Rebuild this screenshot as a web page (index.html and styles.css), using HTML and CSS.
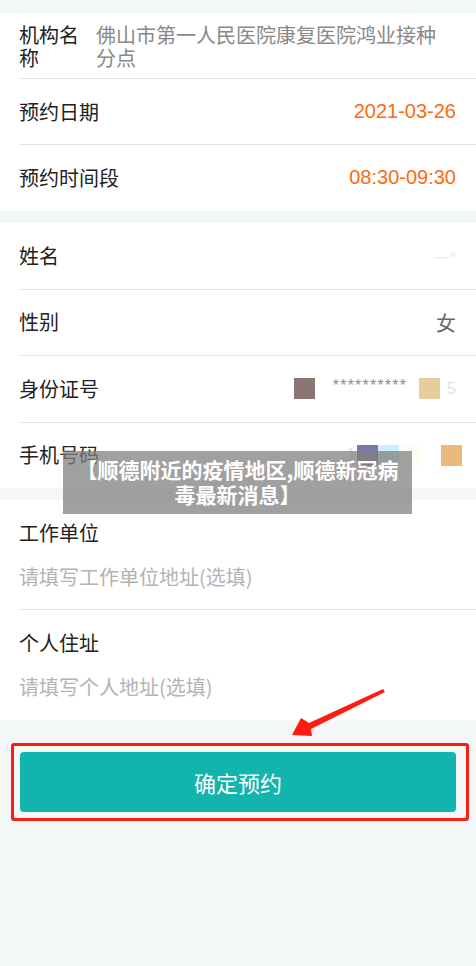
FILE: index.html
```html
<!DOCTYPE html>
<html lang="zh-CN">
<head>
<meta charset="utf-8">
<title>确定预约</title>
<link rel="stylesheet" href="styles.css">
</head>
<body>
<div class="page">
  <section class="card card-info">
    <div class="row row-tall">
      <div class="label label-narrow">机构名称</div>
      <div class="value-left">佛山市第一人民医院康复医院鸿业接种分点</div>
    </div>
    <div class="row">
      <div class="label">预约日期</div>
      <div class="value-orange">2021-03-26</div>
    </div>
    <div class="row">
      <div class="label">预约时间段</div>
      <div class="value-orange">08:30-09:30</div>
    </div>
  </section>

  <section class="card card-person">
    <div class="row">
      <div class="label">姓名</div>
      <div class="mask-faint">一*</div>
    </div>
    <div class="row">
      <div class="label">性别</div>
      <div class="value-gray">女</div>
    </div>
    <div class="row">
      <div class="label">身份证号</div>
      <div class="masked">
        <span class="blk blk-brown"></span>
        <span class="stars">**********</span>
        <span class="blk blk-beige"></span>
        <span class="faint-digit">5</span>
      </div>
    </div>
    <div class="row">
      <div class="label">手机号码</div>
      <div class="masked masked-phone">
        <span class="faint-one">1</span>
        <span class="blk blk-purple"></span>
        <span class="blk blk-sky"></span>
        <span class="blk blk-cream"></span>
        <span class="blk blk-gap"></span>
        <span class="blk blk-orange"></span>
      </div>
    </div>
  </section>

  <section class="card card-extra">
    <div class="block">
      <div class="label">工作单位</div>
      <div class="placeholder">请填写工作单位地址(选填)</div>
    </div>
    <div class="block">
      <div class="label">个人住址</div>
      <div class="placeholder">请填写个人地址(选填)</div>
    </div>
  </section>

  <div class="btn-frame">
    <button class="btn" type="button">确定预约</button>
  </div>
</div>

<div class="caption">【顺德附近的疫情地区,顺德新冠病<br>毒最新消息】</div>

<svg class="arrow" width="476" height="966" viewBox="0 0 476 966" xmlns="http://www.w3.org/2000/svg">
  <polygon points="383,689 309,723 301,718 292,735 312,736 311,729 385,692" fill="#ff1a12"/>
</svg>
</body>
</html>
```

FILE: styles.css
```css
html, body {
  margin: 0;
  padding: 0;
}
body {
  background: #f4f7f8;
  font-family: "Liberation Sans", "Noto Sans CJK SC", sans-serif;
  color: #222;
  width: 476px;
  min-height: 966px;
  position: relative;
}
.page {
  padding-top: 13px;
  display: flex;
  flex-direction: column;
}
.card {
  background: #fff;
}
.card-info {
  margin-bottom: 13px;
}
.card-person {
  margin-bottom: 12px;
}
.card-extra {
  margin-bottom: 23px;
}
.row {
  margin-left: 19px;
  padding-right: 20px;
  height: 65px;
  border-bottom: 1px solid #e4e4e4;
  display: flex;
  align-items: center;
  justify-content: space-between;
  font-size: 20px;
}
.card-person .row {
  height: 65.5px;
}
.row:last-child {
  border-bottom: none;
}
.row-tall {
  justify-content: flex-start;
  gap: 17px;
  padding-right: 30px;
}
.label {
  font-size: 20px;
  line-height: 24px;
  color: #222;
  font-family: "Noto Sans CJK SC", sans-serif;
}
.label-narrow {
  width: 60px;
  flex: none;
  line-height: 23px;
}
.value-left {
  color: #888;
  font-size: 20px;
  line-height: 23px;
  font-family: "Noto Sans CJK SC", sans-serif;
}
.value-orange {
  color: #ff6a0d;
  font-size: 20px;
  font-family: "Liberation Sans", sans-serif;
}
.value-gray {
  color: #666;
  font-size: 20px;
  font-family: "Noto Sans CJK SC", sans-serif;
}
.mask-faint {
  color: #ececec;
  font-size: 16px;
  margin-top: 2px;
}
.masked {
  display: flex;
  align-items: center;
  height: 21px;
}
.masked-phone {
  margin-right: -6px;
}
.blk {
  display: block;
  width: 21px;
  height: 21px;
  flex: none;
}
.blk-brown { background: #8b7674; }
.blk-beige { background: #e6cd9b; margin-left: 12px; }
.blk-purple { background: #7a7aa9; }
.blk-sky { background: #cdeefb; }
.blk-cream { background: #fffdf2; }
.blk-gap { background: #ffffff; }
.blk-orange { background: #e9b97e; }
.stars {
  color: #8a8f96;
  font-size: 16px;
  letter-spacing: 1.2px;
  margin-left: 18px;
  line-height: 21px;
  position: relative;
  top: -3px;
}
.faint-digit {
  color: #e2e2e2;
  font-size: 16px;
  margin-left: 7px;
}
.faint-one {
  color: #e6e6e6;
  font-size: 18px;
  margin-right: 1px;
}
.block {
  margin-left: 19px;
  padding: 21px 20px 20px 0;
  border-bottom: 1px solid #e4e4e4;
  display: flex;
  flex-direction: column;
  gap: 20px;
}
.block:last-child {
  border-bottom: none;
  padding-bottom: 21px;
}
.placeholder {
  color: #b3b3b3;
  font-size: 20px;
  line-height: 24px;
  font-family: "Noto Sans CJK SC", sans-serif;
}
.btn-frame {
  margin-left: 11px;
  width: 444px;
  border: 3px solid #ff1a12;
  border-radius: 3px;
  padding: 6px 2px 6px 6px;
}
.btn {
  display: block;
  width: 436px;
  height: 60px;
  border: none;
  border-radius: 4px;
  background: #12b4ae;
  color: #fff;
  font-size: 22px;
  font-family: "Noto Sans CJK SC", sans-serif;
  padding: 0;
}
.caption {
  position: absolute;
  left: 63px;
  top: 451px;
  width: 349px;
  height: 63px;
  box-sizing: border-box;
  padding-top: 6px;
  background: rgba(128, 128, 128, 0.75);
  color: #fff;
  font-weight: bold;
  font-size: 21px;
  line-height: 25px;
  text-align: center;
  font-family: "Noto Sans CJK SC", sans-serif;
}
.arrow {
  position: absolute;
  left: 0;
  top: 0;
  pointer-events: none;
}
```
